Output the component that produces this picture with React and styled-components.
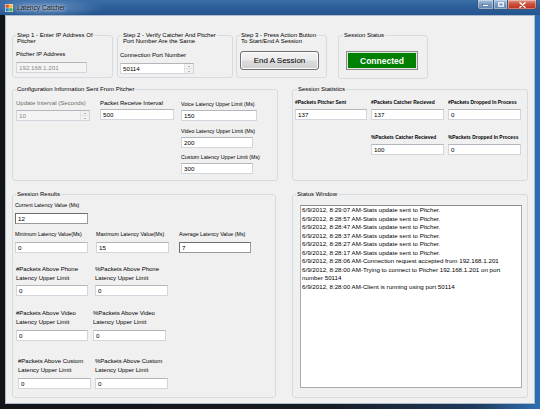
import React from 'react'
import styled, { createGlobalStyle } from 'styled-components'

const GlobalStyle = createGlobalStyle`
  html, body {
    margin: 0;
    padding: 0;
    background: #111318;
  }
  body {
    font-family: "Liberation Sans", Arial, sans-serif;
    color: #000;
  }
`

const Frame = styled.div`
  width: 540px;
  height: 409px;
  display: flex;
  flex-direction: column;
  overflow: hidden;
  background: linear-gradient(to right, #121419 0%, #171b22 60%, #1f3a5c 88%, #2d6fb4 100%);
`

const TitleBar = styled.div`
  height: 15px;
  flex: none;
  display: flex;
  align-items: center;
  padding-left: 5px;
  background:
    radial-gradient(ellipse 60px 10px at 45px 8px, rgba(150, 185, 225, 0.55), rgba(150, 185, 225, 0) 100%),
    linear-gradient(to bottom, #3c6ea8 0%, #2c5e99 45%, #245591 100%);
`

const AppIcon = styled.svg`
  width: 8px;
  height: 8px;
  flex: none;
`

const Caption = styled.span`
  margin-left: 4px;
  font-size: 6.6px;
  line-height: 15px;
  color: #111;
  text-shadow: 0 0 4px rgba(235, 242, 252, 0.9), 0 0 2px rgba(235, 242, 252, 0.9);
`

const Controls = styled.div`
  margin-left: auto;
  margin-right: 3px;
  align-self: flex-start;
  display: flex;
`

const CtrlButton = styled.div`
  width: ${p => p.$w}px;
  height: 10px;
  box-sizing: border-box;
  display: flex;
  align-items: center;
  justify-content: center;
  border: 1px solid #3a587d;
  border-top: none;
  border-left: ${p => (p.$first ? '1px solid #3a587d' : 'none')};
  border-radius: ${p => p.$radius || '0'};
  background: ${p =>
    p.$close
      ? 'linear-gradient(to bottom, #e09a8c 0%, #cc4f3c 45%, #b8301c 100%)'
      : 'linear-gradient(to bottom, #a9c1dd 0%, #7b9cc4 45%, #5d82b0 100%)'};
  box-shadow: inset 0 0 0 1px rgba(255, 255, 255, 0.35);
`

const Client = styled.div`
  flex: 1;
  margin: 0 5px 5px 5px;
  background: #f0f0f0;
  border: 1px solid #aebccc;
  padding: 19px 0 0 6px;
  display: flex;
  flex-direction: column;
`

const Row = styled.div`
  display: flex;
  align-items: flex-start;
  margin-top: ${p => p.$top || 0}px;
`

const Group = styled.div`
  position: relative;
  box-sizing: border-box;
  flex: none;
  width: ${p => p.$w}px;
  height: ${p => p.$h}px;
  margin-left: ${p => p.$ml || 0}px;
  padding: ${p => p.$pad || '0'};
  border: 1px solid #d5dbe1;
  border-radius: 3px;
`

const Legend = styled.div`
  position: absolute;
  top: -4px;
  left: ${p => p.$left || 3}px;
  padding: 0 1px;
  background: #f0f0f0;
  font-size: 6px;
  line-height: 6px;
  white-space: nowrap;
`

const Field = styled.div`
  flex: none;
  width: ${p => p.$w}px;
  margin-left: ${p => p.$ml || 0}px;
  margin-top: ${p => p.$mt || 0}px;
`

const Label = styled.div`
  font-size: ${p => p.$size || 6}px;
  line-height: ${p => p.$lh || 7}px;
  font-weight: ${p => (p.$bold ? 700 : 400)};
  color: ${p => (p.$dim ? '#6d6d6d' : '#000')};
  margin-bottom: ${p => p.$mb ?? 3}px;
  white-space: nowrap;
`

const TextBox = styled.div`
  position: relative;
  box-sizing: border-box;
  height: 11px;
  width: ${p => (p.$w ? `${p.$w}px` : '100%')};
  padding-left: 2px;
  font-size: 6.2px;
  line-height: 9px;
  background: ${p => (p.$disabled ? '#f4f4f4' : '#fff')};
  color: ${p => (p.$disabled ? '#8a8a8a' : '#000')};
  border: 1px solid ${p => (p.$dark ? '#9a9a9a' : '#d2d6dc')};
  border-top-color: ${p => (p.$dark ? '#6e6e6e' : '#b3b7bd')};
  border-left-color: ${p => (p.$dark ? '#6e6e6e' : '#d2d6dc')};
`

const Spin = styled.div`
  position: absolute;
  top: 0;
  right: 0;
  bottom: 0;
  width: 8px;
  display: flex;
  flex-direction: column;
  border-left: 1px solid #dfe2e6;
  background: #f1f1f1;
`

const SpinHalf = styled.div`
  flex: 1;
  display: flex;
  align-items: center;
  justify-content: center;
  border-bottom: ${p => (p.$top ? '1px solid #dfe2e6' : 'none')};
`

const Arrow = styled.div`
  width: 0;
  height: 0;
  border-left: 1.5px solid transparent;
  border-right: 1.5px solid transparent;
  ${p => (p.$up ? 'border-bottom: 1.5px solid #777;' : 'border-top: 1.5px solid #777;')}
`

const Button = styled.div`
  box-sizing: border-box;
  width: ${p => p.$w}px;
  height: 19px;
  display: flex;
  align-items: center;
  justify-content: center;
  font-size: 8px;
  border: 1px solid #707070;
  border-radius: 3px;
  background: linear-gradient(to bottom, #f4f4f4 0%, #ebebeb 48%, #dcdcdc 52%, #cfcfcf 100%);
  box-shadow: inset 0 0 0 1px #fbfbfb;
`

const StatusBadge = styled.div`
  box-sizing: border-box;
  width: ${p => p.$w}px;
  height: 19px;
  display: flex;
  align-items: center;
  justify-content: center;
  background: #008000;
  color: #fff;
  font-size: 8.5px;
  font-weight: 700;
  border: 1px solid #8c8c8c;
  box-shadow: inset 0 0 0 1px #dfe8df;
`

const Column = styled.div`
  display: flex;
  flex-direction: column;
  margin-left: ${p => p.$ml || 0}px;
  margin-top: ${p => p.$mt || 0}px;
`

const StatsGrid = styled.div`
  display: grid;
  grid-template-columns: 72px 73px 73px;
  column-gap: 4px;
  row-gap: 14.5px;
`

const Cell = styled.div`
  grid-column: ${p => p.$col};
`

const LogBox = styled.div`
  box-sizing: border-box;
  width: 222px;
  height: 183px;
  margin: 10px 0 0 7px;
  padding: 0 0 0 1px;
  background: #fff;
  border: 1px solid #a9adb3;
  border-top-color: #8a8e94;
  font-size: 6.2px;
  line-height: 8.5px;
`

const LogLine = styled.div`
  white-space: nowrap;
`

function TextField({ label, value, w, ml, mt, size, lh, mb, bold, dim, disabled, dark, spin }) {
  return (
    <Field $w={w} $ml={ml} $mt={mt}>
      <Label $size={size} $lh={lh} $mb={mb} $bold={bold} $dim={dim}>
        {label}
      </Label>
      <TextBox $disabled={disabled} $dark={dark}>
        {value}
        {spin && (
          <Spin>
            <SpinHalf $top>
              <Arrow $up />
            </SpinHalf>
            <SpinHalf>
              <Arrow />
            </SpinHalf>
          </Spin>
        )}
      </TextBox>
    </Field>
  )
}

const logLines = [
  '6/9/2012, 8:29:07 AM-Stats update sent to Pitcher.',
  '6/9/2012, 8:28:57 AM-Stats update sent to Pitcher.',
  '6/9/2012, 8:28:47 AM-Stats update sent to Pitcher.',
  '6/9/2012, 8:28:37 AM-Stats update sent to Pitcher.',
  '6/9/2012, 8:28:27 AM-Stats update sent to Pitcher.',
  '6/9/2012, 8:28:17 AM-Stats update sent to Pitcher.',
  '6/9/2012, 8:28:06 AM-Connection request accepted from 192.168.1.201',
  '6/9/2012, 8:28:00 AM-Trying to connect to Pitcher 192.168.1.201 on port',
  'number 50114',
  '6/9/2012, 8:28:00 AM-Client is running using port 50114',
]

const twoLine = (a, b) => (
  <>
    {a}
    <br />
    {b}
  </>
)

export default function App() {
  return (
    <>
      <GlobalStyle />
      <Frame>
        <TitleBar>
          <AppIcon viewBox="0 0 8 8">
            <rect x="0" y="0" width="8" height="8" fill="#f4f4f4" />
            <rect x="0.5" y="0.5" width="3.3" height="3.3" fill="#e2512f" />
            <rect x="4.2" y="0.5" width="3.3" height="3.3" fill="#f2b824" />
            <rect x="0.5" y="4.2" width="3.3" height="3.3" fill="#2f7fd8" />
            <rect x="4.2" y="4.2" width="3.3" height="3.3" fill="#4fae3c" />
          </AppIcon>
          <Caption>Latency Catcher</Caption>
          <Controls>
            <CtrlButton $w={17} $first $radius="0 0 0 3px">
              <svg width="7" height="4" viewBox="0 0 7 4">
                <rect x="0.5" y="1.5" width="6" height="2" fill="#fff" stroke="#33507a" strokeWidth="0.5" />
              </svg>
            </CtrlButton>
            <CtrlButton $w={14}>
              <svg width="6" height="5" viewBox="0 0 6 5">
                <rect x="0.75" y="0.75" width="4.5" height="3.5" fill="none" stroke="#fff" strokeWidth="1.2" />
              </svg>
            </CtrlButton>
            <CtrlButton $w={29} $close $radius="0 0 3px 0">
              <svg width="7" height="6" viewBox="0 0 7 6">
                <path d="M1 0.8 L6 5.2 M6 0.8 L1 5.2" stroke="#fff" strokeWidth="1.5" strokeLinecap="round" />
              </svg>
            </CtrlButton>
          </Controls>
        </TitleBar>

        <Client>
          <Row>
            <Group $w={101} $h={43} $pad="14.5px 0 0 3px">
              <Legend $left={3}>{twoLine('Step 1 - Enter IP Address Of', 'Pitcher')}</Legend>
              <TextField label="Pitcher IP Address" value="192.168.1.201" w={71} mb={4.5} disabled />
            </Group>
            <Group $w={116} $h={43} $ml={4} $pad="15.5px 0 0 2px">
              <Legend $left={4}>{twoLine('Step 2 - Verify Catcher And Pitcher', 'Port Number Are the Same')}</Legend>
              <TextField label="Connection Port Number" value="50114" w={74} mb={4.5} spin />
            </Group>
            <Group $w={91} $h={43} $ml={3} $pad="15px 0 0 3px">
              <Legend $left={3}>{twoLine('Step 3 - Press Action Button', 'To Start/End A Session')}</Legend>
              <Button $w={79}>End A Session</Button>
            </Group>
            <Group $w={90} $h={44} $ml={11} $pad="15px 0 0 7px">
              <Legend $left={4}>Session Status</Legend>
              <StatusBadge $w={72}>Connected</StatusBadge>
            </Group>
          </Row>

          <Row $top={10}>
            <Group $w={266} $h={92} $pad="9.5px 0 0 3px">
              <Legend $left={3}>Configuration Information Sent From Pitcher</Legend>
              <Row>
                <TextField label="Update Interval (Seconds)" value="10" w={74} mb={3.5} dim disabled spin />
                <TextField label="Packet Receive Interval" value="500" w={74} ml={10} mb={2.5} />
                <Column $ml={7} $mt={1}>
                  <TextField label="Voice Latency Upper Limit (Ms)" value="150" w={76} size={5.3} mb={2} />
                  <TextField label="Video Latency Upper Limit (Ms)" value="200" w={72} size={5.3} mt={7} mb={2} />
                  <TextField label="Custom Latency Upper Limit (Ms)" value="300" w={72} size={5.3} mt={6.5} mb={2} />
                </Column>
              </Row>
            </Group>
            <Group $w={236} $h={92} $ml={14} $pad="8.5px 0 0 2px">
              <Legend $left={4}>Session Statistics</Legend>
              <StatsGrid>
                <Cell $col={1}>
                  <TextField label="#Packets Pitcher Sent" value="137" w={72} size={4.9} bold />
                </Cell>
                <Cell $col={2}>
                  <TextField label="#Packets Catcher Recieved" value="137" w={73} size={4.9} bold />
                </Cell>
                <Cell $col={3}>
                  <TextField label="#Packets Dropped In Process" value="0" w={73} size={4.9} bold />
                </Cell>
                <Cell $col={2}>
                  <TextField label="%Packets Catcher Recieved" value="100" w={73} size={4.9} bold mb={2.5} />
                </Cell>
                <Cell $col={3}>
                  <TextField label="%Packets Dropped In Process" value="0" w={73} size={4.9} bold mb={2.5} />
                </Cell>
              </StatsGrid>
            </Group>
          </Row>

          <Row $top={13}>
            <Group $w={264} $h={204} $pad="6.5px 0 0 2px">
              <Legend $left={3}>Session Results</Legend>
              <TextField label="Current Latency Value (Ms)" value="12" w={73} size={5.3} mb={4.5} dark />
              <Row $top={6.5}>
                <TextField label="Minimum Latency Value(Ms)" value="0" w={73} size={5.3} mb={4.5} />
                <TextField label="Maximum Latency Value(Ms)" value="15" w={73} ml={8} size={5.3} mb={4.5} />
                <TextField label="Average Latency Value (Ms)" value="7" w={72} ml={10} size={5.3} mb={4.5} dark />
              </Row>
              <Row $top={11.5}>
                <TextField label={twoLine('#Packets Above Phone', 'Latency Upper Limit')} value="0" w={72} ml={1} lh={9} mb={2.5} />
                <TextField label={twoLine('%Packets Above Phone', 'Latency Upper Limit')} value="0" w={73} ml={7} lh={9} mb={2.5} />
              </Row>
              <Row $top={13}>
                <TextField label={twoLine('#Packets Above Video', 'Latency Upper Limit')} value="0" w={72} ml={1} lh={9} mb={3} />
                <TextField label={twoLine('%Packets Above Video', 'Latency Upper Limit')} value="0" w={73} ml={5} lh={9} mb={3} />
              </Row>
              <Row $top={15.5}>
                <TextField label={twoLine('#Packets Above Custom', 'Latency Upper Limit')} value="0" w={73} ml={3} lh={9} mb={3.5} />
                <TextField label={twoLine('%Packets Above Custom', 'Latency Upper Limit')} value="0" w={73} ml={4} lh={9} mb={3.5} />
              </Row>
            </Group>
            <Group $w={236} $h={204} $ml={16}>
              <Legend $left={3}>Status Window</Legend>
              <LogBox>
                {logLines.map((line, i) => (
                  <LogLine key={i}>{line}</LogLine>
                ))}
              </LogBox>
            </Group>
          </Row>
        </Client>
      </Frame>
    </>
  )
}
